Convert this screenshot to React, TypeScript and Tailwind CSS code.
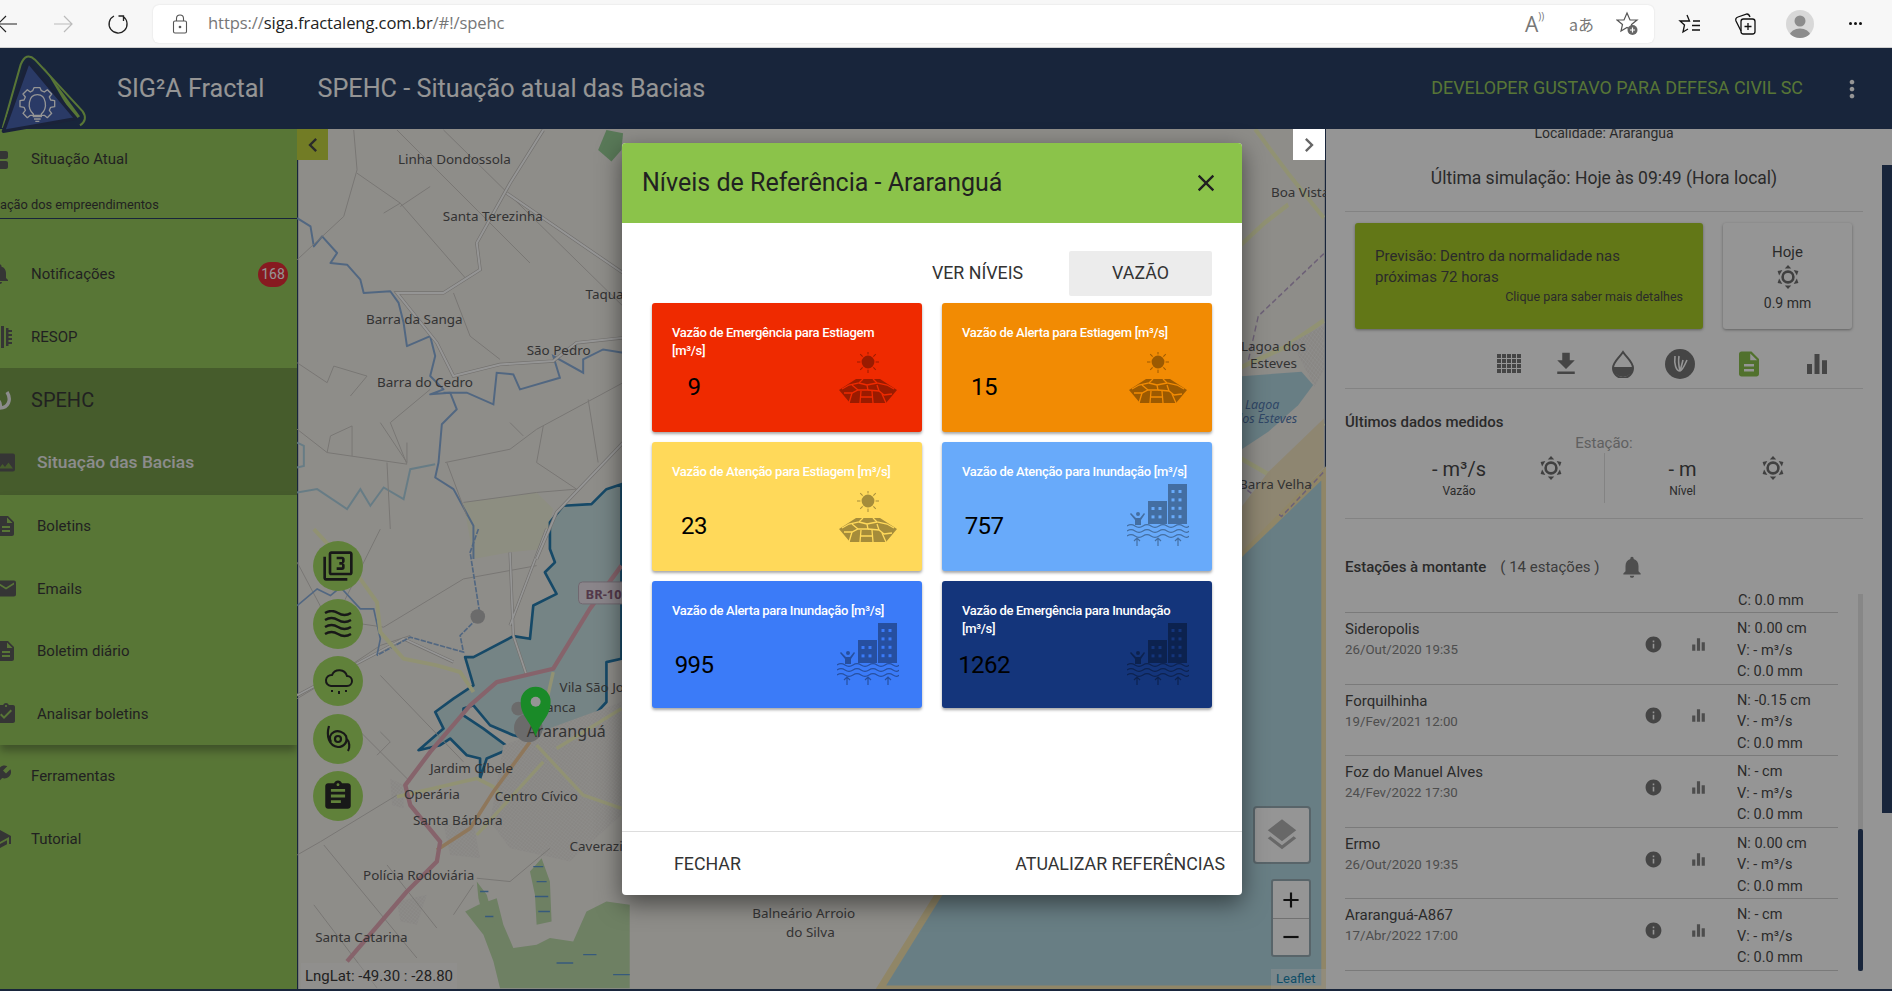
import type { FC, ReactNode } from "react";
import {
  MdFilter3,
  MdAssignment,
  MdAssignmentTurnedIn,
  MdBuild,
  MdClose,
  MdDescription,
  MdEmail,
  MdEqualizer,
  MdFileDownload,
  MdInfo,
  MdLayers,
  MdNotifications,
  MdPhoto,
  MdSchool,
  MdViewAgenda,
  MdChevronLeft,
  MdChevronRight,
  MdAdd,
  MdRemove,
  MdMoreVert,
} from "react-icons/md";

const SunDot: FC<{ size?: number }> = ({ size = 24 }) => (
  <svg width={size} height={size} viewBox="0 0 24 24" className="text-[#5c5c5c]" fill="currentColor">
    <circle cx="12" cy="12" r="5.4" fill="none" stroke="currentColor" strokeWidth="2.6" />
    {[0, 60, 120, 180, 240, 300].map((r) => (
      <polygon key={r} points="8.8,3.6 15.2,3.6 12,0" transform={`rotate(${r} 12 12)`} />
    ))}
  </svg>
);

const Drought: FC = () => (
  <svg width="58" height="52" viewBox="0 0 58 52" fill="currentColor" className="opacity-35">
    <defs>
      <mask id="cracks">
        <polygon points="17,27 41,27 58,38 47,51 11,51 0,38" fill="#fff" />
        <g stroke="#000" strokeWidth="1.3" fill="none">
          <path d="M24 27 L20 31 L10 33 L3 37 M34 27 L38 31 L48 33 L55 37" />
          <path d="M20 31 L28 33 L38 31 M28 33 L29 38 L19 38 L13 41 L5 41" />
          <path d="M29 38 L40 39 L45 43 L53 42 M40 39 L38 33 M19 38 L13 33" />
          <path d="M22 39 L21 51 M33 39 L34 51 M13 41 L10 51 M43 42 L47 51 M21 45 L34 45" />
        </g>
      </mask>
    </defs>
    <circle cx="29" cy="10" r="6.4" />
    {[0, 45, 90, 135, 180, 225, 270, 315].map((r) => (
      <rect key={r} x="28.5" y="-1" width="1" height="3.4" transform={`rotate(${r} 29 10)`} />
    ))}
    <rect x="0" y="26" width="58" height="26" mask="url(#cracks)" />
  </svg>
);

const windows = (x: number, y: number, rows: number, cols: number) => {
  const rects = [];
  for (let r = 0; r < rows; r++) {
    for (let c = 0; c < cols; c++) {
      rects.push(<rect key={`${r}-${c}`} x={x + c * 7} y={y + r * 8.4} width="3" height="3" fill="var(--hole)" />);
    }
  }
  return rects;
};

const Flood: FC<{ hole: string }> = ({ hole }) => (
  <svg
    width="62"
    height="62"
    viewBox="0 0 62 62"
    style={{ ["--hole" as string]: hole }}
    fill="currentColor"
    stroke="none"
  >
    <g className="opacity-35">
      <rect x="41" y="0" width="19" height="40" />
      <rect x="21" y="17" width="19" height="23" />
      <circle cx="11" cy="30" r="2" />
      <path d="M4 29 L9 34 H13 L17 29 L18 30 L14 36 V41 H8 V36 L3 30Z" />
      <g fill="none" stroke="currentColor" strokeWidth="1.2">
        <path d="M0 42 q4 -2.6 8 0 t8 0 t8 0 t8 0 t8 0 t8 0 t8 0 t6 0" />
        <path d="M0 47 q4 -2.6 8 0 t8 0 t8 0 t8 0 t8 0 t8 0 t8 0 t6 0" />
        <path d="M0 52 q4 -2.6 8 0 t8 0 t8 0 t8 0 t8 0 t8 0 t8 0 t6 0" />
        {[10, 31, 51].map((x) => (
          <path key={x} d={`M${x} 62 V54 M${x - 3} 57 L${x} 54 L${x + 3} 57`} />
        ))}
      </g>
    </g>
    {windows(44.5, 6, 4, 2)}
    {windows(24.5, 23, 2, 2)}
  </svg>
);

type CardProps = {
  title: ReactNode;
  value: string;
  bg: string;
  flood?: boolean;
  hole?: string;
};

const LevelCard: FC<CardProps> = ({ title, value, bg, flood, hole = "" }) => (
  <div className={`relative h-full rounded-[3px] px-5 pt-[21px] shadow-[0_2px_3px_rgba(0,0,0,.35)] ${bg}`}>
    <p className="text-[13px] leading-[18px] font-medium tracking-[-0.3px] text-white">{title}</p>
    <span className="absolute top-[69px] left-0 w-[84px] text-center text-[24px] leading-[30px] tracking-[-0.6px] text-black">
      {value}
    </span>
    {flood ? (
      <div className="absolute top-[42px] left-[185px] text-black">
        <Flood hole={hole} />
      </div>
    ) : (
      <div className="absolute top-[49px] left-[187px] text-black">
        <Drought />
      </div>
    )}
  </div>
);

const BrowserBar: FC = () => (
  <div className="flex h-[48px] shrink-0 items-center border-b border-[#d0d0d0] bg-[#f7f7f7]">
    <svg width="20" height="20" viewBox="0 0 20 20" className="ml-[-3px]" fill="none" stroke="#222" strokeWidth="1.2">
      <path d="M1 10 H20 M9 2 L1 10 L9 18" />
    </svg>
    <svg width="20" height="20" viewBox="0 0 20 20" className="ml-[36px]" fill="none" stroke="#bbb" strokeWidth="1.2">
      <path d="M1 10 H19 M11 2 L19 10 L11 18" />
    </svg>
    <svg width="22" height="22" viewBox="0 0 22 22" className="ml-[34px]" fill="none" stroke="#222" strokeWidth="1.3">
      <path d="M16 3.5 A9 9 0 1 1 7 3" />
      <path d="M11.5 3 H16.5 V8" />
    </svg>
    <div className="ml-[24px] flex h-[38px] w-[1501px] items-center rounded-[6px] bg-white pr-[14px] shadow-[0_0_2px_rgba(0,0,0,.12)]">
      <svg width="16" height="20" viewBox="0 0 16 20" className="ml-[19px]" fill="none" stroke="#555" strokeWidth="1.1">
        <rect x="1.5" y="7" width="13" height="12" rx="1.5" />
        <path d="M4.5 7 V4.5 a3.5 3.5 0 0 1 7 0 V7" />
        <circle cx="8" cy="13" r=".8" fill="#555" />
      </svg>
      <span className="ml-[20px] font-['Open_Sans',sans-serif] text-[16.6px] tracking-[-0.1px] text-[#777]">
        https://<span className="text-[#222]">siga.fractaleng.com.br</span>/#!/spehc
      </span>
      <div className="ml-auto flex items-center gap-[22px]">
        <span className="mr-[-4px] flex h-6 w-[26px] items-start font-['Open_Sans',sans-serif] text-[21px] leading-[24px] text-[#777]">
          A
          <span className="mt-[-2px] text-[10px] leading-[12px]">))</span>
        </span>
        <span className="font-['Noto_Sans_CJK_JP',sans-serif] text-[16px] text-[#777]">aあ</span>
        <svg width="24" height="26" viewBox="0 0 24 26" fill="none" stroke="#555" strokeWidth="1.2">
          <path d="M11 2 L14 9 H21 L15.5 13.5 L17 20 L11 16.5 L5 20 L6.5 13.5 L1 9 H8Z" />
          <circle cx="16.5" cy="19" r="5" fill="#666" stroke="none" />
          <path d="M14 19 H19 M16.5 16.5 V21.5" stroke="#fff" />
        </svg>
      </div>
    </div>
    <div className="ml-[24px] flex items-center">
      <svg width="24" height="24" viewBox="0 0 24 24" fill="none" stroke="#111" strokeWidth="1.3">
        <path d="M9 3 L11.5 9 H6 H2 L6.5 13 L5 20 L10 17 M22 9 H15 M22 13.5 H14 M22 18 H14" />
      </svg>
      <svg width="24" height="26" viewBox="0 0 24 26" className="ml-[31px]" fill="none" stroke="#111" strokeWidth="1.3">
        <rect x="8" y="8" width="14" height="15" rx="2.5" />
        <path d="M8 20 L3 10 Q2 7 5 6 L14 3 Q16 3 17 6" />
        <path d="M15 12 V19 M11.5 15.5 H18.5" />
      </svg>
      <div className="ml-[29px] h-[28px] w-[28px] overflow-hidden rounded-full bg-[#d8d8d8]">
        <svg width="28" height="28" viewBox="0 0 28 28" fill="#8c8c8c">
          <circle cx="14" cy="11" r="5.5" />
          <ellipse cx="14" cy="25" rx="10" ry="6.5" />
        </svg>
      </div>
      <span className="ml-[35px] flex gap-[2px]">
        <i className="h-[3px] w-[3px] rounded-full bg-[#111]" />
        <i className="h-[3px] w-[3px] rounded-full bg-[#111]" />
        <i className="h-[3px] w-[3px] rounded-full bg-[#111]" />
      </span>
    </div>
  </div>
);

const Logo: FC = () => (
  <svg width="100" height="90" viewBox="0 0 300 270" className="absolute top-0 left-0" fill="none">
    <path d="M8 240 L62 50 Q78 10 105 35 L248 190 Q265 215 240 232" stroke="#8bc34a" strokeWidth="6" />
    <path d="M130 55 L240 205 L225 215Z" fill="#8bc34a" />
    <path d="M85 42 L228 212 L10 250Z" fill="#3251a5" stroke="#14244f" strokeWidth="10" strokeLinejoin="round" />
    <g stroke="#fff" strokeWidth="4" strokeLinejoin="round">
      <path d="M98 128 L102 119 H120 L124 128 L133 132 L142 125 L155 138 L148 147 L152 156 L164 158 V176 L152 178 L148 187 L155 196 L142 209 L133 202 H91 L82 209 L69 196 L76 187 L72 178 L60 176 V158 L72 156 L76 147 L69 138 L82 125 L91 132Z" />
      <path d="M100 198 C80 180 85 140 112 140 C139 140 144 180 124 198 V206 H100Z" />
      <path d="M102 213 H122 M106 220 H118" />
    </g>
  </svg>
);

const labels: [string, number, number, number?][] = [
  ["Linha Dondossola", 397, 164],
  ["Santa Terezinha", 442, 221],
  ["Taquari", 585, 299],
  ["Barra da Sanga", 365, 324],
  ["São Pedro", 526, 356],
  ["Barra do Cedro", 376, 388],
  ["Vila São João", 559, 693],
  ["Franca", 533, 713],
  ["Araranguá", 526, 738, 16],
  ["Jardim Cibele", 429, 774],
  ["Operária", 403, 801],
  ["Centro Cívico", 494, 803],
  ["Santa Bárbara", 412, 827],
  ["Caverazinho", 569, 853],
  ["Polícia Rodoviária", 362, 882],
  ["Santa Catarina", 314, 944],
  ["Balneário Arroio", 752, 920],
  ["do Silva", 786, 939],
  ["Boa Vista", 1272, 197],
  ["Lagoa dos", 1242, 352],
  ["Esteves", 1251, 369],
  ["Barra Velha", 1240, 490],
];

const z10Roads = "M640 70 L650 320 L690 440 M750 0 L640 290 M0 500 L320 330 L470 400";
const z9Roads =
  "M740 0 L640 160 L540 340 L550 420 L440 490 L300 490 L420 640 L470 740 L610 705 L770 695 L840 640 L980 625 M980 430 L630 190 M980 940 L780 1150 L720 1290";

const MapLayer: FC = () => (
  <svg viewBox="297 129 1029 862" className="absolute inset-0 h-full w-full" fill="none">
    <defs>
      <pattern id="town" width="8" height="8" patternUnits="userSpaceOnUse" patternTransform="rotate(38)">
        <rect width="8" height="8" fill="#e8e5df" />
        <path d="M0 0 H8 M0 0 V8" stroke="#fbfbfb" strokeWidth="1.4" />
      </pattern>
    </defs>
    <rect x="297" y="129" width="1029" height="862" fill="#f2efe9" />
    <polygon points="1326,473 1243,553 1100,700 980,830 880,991 1326,991" fill="#aad3df" stroke="#f5e3a8" strokeWidth="7" />

    <g transform="translate(296 530) scale(.3333)">
      <path d="M500 -80 L720 -110 L770 -60 L740 60 L640 70 L530 90Z" fill="#f0f1d8" />
      <polygon points="975,-135 930,-120 885,-75 800,-70 760,-20 760,60 775,100 745,130 780,195 710,230 700,330 650,322 530,385 505,385 530,470 470,510 415,550 440,600 365,665 430,650 460,630 510,680 550,690 550,750 570,690 640,660 560,600 500,560 500,540 530,530 580,590 650,620 740,640 790,640 790,690 830,680 830,715 850,650 890,645 820,640 930,520 930,400 975,390" fill="#c2dfe0" stroke="#0d6ea8" strokeWidth="8" strokeLinejoin="round" />
      <polygon points="620,650 975,520 975,860 820,1000 640,960 580,880" fill="url(#town)" />
      <polygon points="280,750 320,770 320,840 285,830" fill="url(#town)" />
      <polygon points="440,890 530,880 550,990 460,980" fill="url(#town)" />
      <polygon points="300,1120 390,1100 360,1190 310,1180" fill="url(#town)" />
      <path d="M505 1150 L545 1130 L600 1110 L620 1190 L650 1260 L720 1250 L760 1230 L830 1240 L870 1150 L930 1120 L1000 1130 L1000 1381 L610 1381 L590 1300 L560 1220Z" fill="#b4d6a0" />
      <path d="M700 1030 L735 990 L760 1060 L765 1180 L720 1190 L715 1100Z M540 1060 L570 1100 L595 1190 L560 1170 L545 1110Z" fill="#b4d6a0" />
      <path d="M710 1015 H740 M720 1060 H750 M715 1105 H755 M725 1150 H760 M550 1090 H575 M565 1165 H590 M860 1280 H900 M780 1305 H830 M950 1340 H1000" stroke="#4a8fd0" strokeWidth="4" />

      <g stroke="#c8c5bf" strokeWidth="3">
        <path d="M0 100 L90 270 L260 295 L500 150 L720 110 M0 510 L100 450 L250 350 L340 320 M0 980 L70 940 L300 800 M80 950 L360 1290 M120 260 L250 0 M250 440 L500 700 M180 600 L340 760 M250 610 L280 640 L240 680 M50 1130 L240 1380 M270 1010 L420 1200 M540 1050 L640 1060 L760 960 M470 1160 L530 1070" />
      </g>
      <path d={z10Roads} stroke="#bdbab4" strokeWidth="9" />
      <path d={z10Roads} stroke="#fff" strokeWidth="5" />
      <path d="M545 0 L520 70 L550 260 L490 320 L500 370 L340 325 L240 380" stroke="#7ea7d8" strokeWidth="5" strokeDasharray="16 4" />
      <path d="M0 230 L60 180 L100 200 L130 175 L190 240 L230 240 L250 330 L240 380" stroke="#7ea7d8" strokeWidth="5" />
      <path d="M50 0 L190 150 L240 220 L250 310 L320 390 L420 410 L490 430 L530 490" stroke="#f7fabf" strokeWidth="12" />
      <path d="M300 805 L540 750 L590 775 L610 800" stroke="#f7fabf" strokeWidth="11" />
      <path d="M700 640 L590 790 L520 900 L420 965" stroke="#f2c591" strokeWidth="11" />
      <path d="M770 430 L740 560 M720 650 L860 800 L975 840 M740 700 L540 920 M780 660 L975 540" stroke="#f7fabf" strokeWidth="10" />
      <path d="M975 110 L880 240 L770 420 L600 460 L520 530 L400 670 L325 770 L340 830 L430 940 L420 1000 L330 1090 L150 1300" stroke="#e2a0ae" strokeWidth="13" strokeLinejoin="round" />
      <circle cx="543" cy="263" r="22" fill="#afafaf" />
      <circle cx="665" cy="540" r="21" fill="#afafaf" />
      <circle cx="695" cy="598" r="43" fill="#afafaf" />
    </g>

    <g transform="translate(296 130) scale(.3333)">
      <path d="M0 265 L40 290 L50 350 L75 320 L120 370 L100 400 L150 405 L190 450 L200 490 L280 485 L305 520 L320 580 L330 650 L400 620 L415 680 L400 740 L440 780 L400 795 L460 790 L480 840 L435 885 L425 1000 L415 1045 L470 1080 L530 1190 L530 1290" stroke="#7ea7d8" strokeWidth="6" strokeLinejoin="round" />
      <path d="M440 790 L510 790 L590 825 L600 730 L650 735 L670 780 L790 745 L770 680 L860 730 L860 690 L920 660 L980 670" stroke="#7ea7d8" strokeWidth="6" />
      <path d="M0 1090 L60 1080 L150 1140 L190 1080 L220 1130 L260 1075 L320 1110 L340 1020 L415 1005 M0 940 L20 950 L20 1010 L0 1015" stroke="#a8d0e0" strokeWidth="6" />
      <g stroke="#c8c5bf" strokeWidth="3">
        <path d="M170 0 L180 120 L140 260 L0 390 M180 130 L310 220 L510 450 M300 0 L700 400 M440 0 L980 530 M310 230 L400 170 M260 250 L310 220 M0 700 L90 760 L110 710 L210 740 L160 800 M0 900 L90 970 L330 1005 L280 880 L400 780 M250 880 L330 1000 L330 940 M270 1000 L280 1200 M90 970 L100 920 L165 890 L165 980 M445 1000 L640 960 L720 900 L980 760 M740 890 L720 1000 L840 1080 M875 810 L905 1000 M500 1120 L720 1090 L840 1080 M450 1000 L510 1160 M640 880 L680 920 M470 490 L520 620 L610 690" />
      </g>
      <path d={z9Roads} stroke="#bdbab4" strokeWidth="10" />
      <path d={z9Roads} stroke="#fff" strokeWidth="6" />
      <polygon points="930,0 980,10 975,60 945,95 905,60" fill="#8cc98a" />
    </g>

    <g transform="translate(1236 129) scale(.3333 .4464)">
      <path d="M18 555 L200 545 L235 575 L190 620 L100 680 L18 720Z" fill="#aad3df" />
      <path d="M60 0 L160 100 L267 200 M160 170 L90 210 L18 260 M18 535 L150 490 L267 430 M18 740 L100 775 L170 760 L267 660" stroke="#f7fabf" strokeWidth="11" />
      <path d="M267 280 L70 420 L40 520 M18 800 L140 870 L267 770" stroke="#b29bc4" strokeWidth="4" strokeDasharray="14 8" />
      <polygon points="170,480 267,440 267,540 240,580" fill="url(#town)" />
      <polygon points="18,850 100,770 267,650 267,760 18,950" fill="#f1e3bb" />
    </g>

    <g fontFamily="'Noto Sans', sans-serif" fill="#444">
      {labels.map(([t, x, y, s]) => (
        <text key={t} x={x} y={y} fontSize={s ?? 13.5}>
          {t}
        </text>
      ))}
      <text x="1246" y="410" fontSize="12.5" fontStyle="italic" fill="#3d6aa6">Lagoa</text>
      <text x="1236" y="424" fontSize="12.5" fontStyle="italic" fill="#3d6aa6">dos Esteves</text>
    </g>
    <g>
      <rect x="578" y="583" width="60" height="22" rx="4" fill="#eae0ea" stroke="#b8a8b8" />
      <text x="585" y="600" fontSize="13" fontFamily="'Noto Sans', sans-serif" fontWeight="700" fill="#805070">BR-101</text>
    </g>
    <path d="M535 738 C530 722 520 718 520 703 A15 15 0 0 1 550 703 C550 718 540 722 535 738Z" fill="#14ea2e" />
    <circle cx="535" cy="703" r="5" fill="#fff" />
  </svg>
);

const MapButton: FC<{ children: ReactNode }> = ({ children }) => (
  <div className="flex h-[50px] w-[50px] items-center justify-center rounded-full bg-[#9ad951] text-[#111]">{children}</div>
);

const SideRow: FC<{ icon: ReactNode; text: string; sub?: boolean; className?: string; right?: ReactNode }> = ({
  icon,
  text,
  sub,
  className = "text-[15px]",
  right,
}) => (
  <div className="flex h-[62.5px] items-center">
    <span className={`flex w-[24px] shrink-0 justify-center text-[#474747] ${sub ? "ml-[-6px]" : "ml-[-12px]"}`}>{icon}</span>
    <span className={`ml-[19px] ${className}`}>{text}</span>
    {right}
  </div>
);

const Sidebar: FC = () => (
  <aside className="w-[297px] shrink-0 overflow-hidden bg-[#8bc34a] text-[#222]">
    <div className="flex h-[60px] items-center pt-[1px]">
      <MdViewAgenda size={24} className="ml-[-13px] text-[#474747]" />
      <span className="ml-[20px] text-[15px]">Situação Atual</span>
    </div>
    <div className="mb-[24px] h-[30px] border-b border-[#112a53] pt-[8px] text-[12.8px] leading-[15px] whitespace-nowrap">
      <span className="ml-[-22px]">Situação dos empreendimentos</span>
    </div>
    <SideRow
      icon={<MdNotifications size={24} />}
      text="Notificações"
      right={
        <span className="mr-[9px] ml-auto flex h-[25px] w-[30px] items-center justify-center rounded-full bg-[#e4141f] text-[14px] text-white">
          168
        </span>
      }
    />
    <SideRow
      icon={
        <svg width="24" height="24" viewBox="0 0 24 24" fill="currentColor">
          <rect x="13" y="1" width="3" height="22" />
          <rect x="18" y="3" width="2.5" height="18" />
          <path d="M20 5h4v2h-4zM20 9h4v2h-4zM20 13h4v2h-4zM20 17h4v2h-4z" />
        </svg>
      }
      text="RESOP"
    />
    <div className="h-[127px] bg-[#689236]">
      <div className="flex h-[63px] items-center">
        <svg width="24" height="24" viewBox="0 0 24 24" className="ml-[-12px]" fill="none" stroke="#eee" strokeWidth="3.4">
          <path d="M19 4 C24 12 20 20 12 20 C13 16 12 13 8 11" />
        </svg>
        <span className="ml-[19px] text-[20px]">SPEHC</span>
      </div>
      <SideRow icon={<MdPhoto size={25} />} text="Situação das Bacias" sub className="text-[17.4px] font-medium text-[#eee]" />
    </div>
    <div className="shadow-[0_6px_8px_rgba(0,0,0,.35)]">
      <SideRow icon={<MdDescription size={26} />} text="Boletins" sub />
      <SideRow icon={<MdEmail size={25} />} text="Emails" sub />
      <SideRow icon={<MdDescription size={26} />} text="Boletim diário" sub />
      <SideRow icon={<MdAssignmentTurnedIn size={26} />} text="Analisar boletins" sub />
    </div>
    <SideRow icon={<MdBuild size={25} className="scale-x-[-1]" />} text="Ferramentas" />
    <SideRow icon={<MdSchool size={26} />} text="Tutorial" />
  </aside>
);

const stations = [
  { name: "Sideropolis", date: "26/Out/2020 19:35", n: "0.00 cm" },
  { name: "Forquilhinha", date: "19/Fev/2021 12:00", n: "-0.15 cm" },
  { name: "Foz do Manuel Alves", date: "24/Fev/2022 17:30", n: "- cm" },
  { name: "Ermo", date: "26/Out/2020 19:35", n: "0.00 cm" },
  { name: "Araranguá-A867", date: "17/Abr/2022 17:00", n: "- cm" },
];

const StationRow: FC<(typeof stations)[number]> = ({ name, date, n }) => (
  <div className="flex h-[71.6px] shrink-0 items-center border-b border-[#ccc]">
    <div className="w-[287px] self-start pt-[6px]">
      <p className="text-[15px] leading-[20px] text-[#333]">{name}</p>
      <p className="mt-[3px] text-[13.3px] leading-[16px] text-[#757575]">{date}</p>
    </div>
    <MdInfo size={19} className="mt-[-8px] ml-[12px] text-[#666]" />
    <MdEqualizer size={19} className="mt-[-8px] ml-[26px] text-[#757575]" />
    <div className="mt-[4px] ml-[29px] text-[14.5px] leading-[21.5px] text-[#333]">
      <p>N: {n}</p>
      <p>V: - m³/s</p>
      <p>C: 0.0 mm</p>
    </div>
  </div>
);

const GridIcon: FC = () => (
  <svg width="24" height="20" viewBox="0 0 24 20" fill="currentColor">
    {[0, 5, 10, 15].map((y) =>
      [0, 5, 10, 15, 20].map((x) => <rect key={`${x}-${y}`} x={x} y={y} width="4" height="4" />),
    )}
  </svg>
);

const Panel: FC = () => (
  <section className="flex w-[556px] shrink-0 flex-col overflow-hidden bg-white px-[19px] text-[#333]">
    <p className="mt-[-5px] text-center text-[14px] leading-[18px]">Localidade: Araranguá</p>
    <p className="mt-[24px] h-[46px] border-b border-[#ddd] text-center text-[17.5px] leading-[24px]">
      Última simulação: Hoje às 09:49 (Hora local)
    </p>
    <div className="mt-[11px] flex gap-[20px] pl-[10px]">
      <div className="flex h-[106px] w-[348px] flex-col rounded-[3px] bg-[#9dc60e] px-[20px] pt-[23px] shadow-[0_1px_3px_rgba(0,0,0,.4)]">
        <p className="text-[15px] leading-[21px]">
          Previsão: Dentro da normalidade nas
          <br />
          próximas 72 horas
        </p>
        <p className="mt-[1px] text-right text-[12.5px] leading-[16px]">Clique para saber mais detalhes</p>
      </div>
      <div className="flex h-[106px] w-[129px] flex-col items-center rounded-[3px] bg-white pt-[20px] shadow-[0_1px_3px_rgba(0,0,0,.4)]">
        <p className="text-[15px] leading-[18px]">Hoje</p>
        <span className="mt-[4px] h-[24px]"><SunDot /></span>
        <p className="mt-[5px] text-[14px] leading-[18px]">0.9 mm</p>
      </div>
    </div>
    <div className="mt-[20px] flex h-[40px] items-center border-b border-[#ddd] pb-[10px] text-[#666]">
      <span className="ml-[152px]"><GridIcon /></span>
      <MdFileDownload size={30} className="ml-[30px]" />
      <svg width="24" height="28" viewBox="0 0 24 28" className="ml-[30px]">
        <path d="M12 2 C8 8 2 12 2 18 A10 10 0 0 0 22 18 C22 12 16 8 12 2Z" fill="none" stroke="currentColor" strokeWidth="2" />
        <path d="M2 17 H22 A10 10 0 0 1 2 17Z" fill="currentColor" />
      </svg>
      <span className="ml-[30px] flex h-[30px] w-[30px] items-center justify-center rounded-full bg-[#666]">
        <svg width="20" height="20" viewBox="0 0 20 20" fill="none" stroke="#fff" strokeWidth="1.6">
          <path d="M5 2 C4 10 6 17 10 17 C13 16 16 8 17 6 M9 2 C8 8 9 13 10 17 M13 6 C12 10 11 14 10 17" />
        </svg>
      </span>
      <MdDescription size={30} className="ml-[39px] text-[#7dbb38]" />
      <MdEqualizer size={30} className="ml-[38px]" />
    </div>
    <p className="mt-[23px] text-[15px] leading-[20px] font-medium">Últimos dados medidos</p>
    <p className="mt-[1px] text-center text-[15px] leading-[20px] text-[#999]">Estação:</p>
    <div className="flex h-[50px] items-stretch">
      <div className="relative flex w-[259px] flex-col items-center justify-center">
        <span className="ml-[-31px] text-[20px] leading-[26px]">- m³/s</span>
        <span className="ml-[-31px] text-[12px] leading-[18px]">Vazão</span>
        <span className="absolute top-[3px] left-[194px]"><SunDot /></span>
      </div>
      <div className="w-px bg-[#ddd]" />
      <div className="relative flex flex-1 flex-col items-center justify-center">
        <span className="ml-[-103px] text-[20px] leading-[26px]">- m</span>
        <span className="ml-[-103px] text-[12px] leading-[18px]">Nível</span>
        <span className="absolute top-[3px] left-[156px]"><SunDot /></span>
      </div>
    </div>
    <div className="mt-[15px] border-t border-[#ddd]" />
    <div className="mt-[37px] flex h-[22px] items-center text-[15px]">
      <span className="font-medium">Estações à montante</span>
      <span className="ml-[14px] text-[#555]">( 14 estações )</span>
      <MdNotifications size={26} className="ml-[19px] text-[#777]" />
    </div>
    <div className="relative mt-[14px] flex h-[379px] flex-col justify-end overflow-hidden pr-[25px]">
      <div className="shrink-0 border-b border-[#ccc] pb-[1px] pl-[393px] text-[14.5px] leading-[20px]">C: 0.0 mm</div>
      {stations.map((s) => (
        <StationRow key={s.name} {...s} />
      ))}
      <div className="absolute top-[2px] right-0 bottom-0 w-[5px] bg-[#e4e4e4]">
        <div className="absolute right-0 bottom-0 h-[142px] w-full rounded-[2px] bg-[#112a53]" />
      </div>
    </div>
  </section>
);

const App: FC = () => (
  <div className="relative flex h-[991px] w-full flex-col overflow-hidden font-['Roboto',sans-serif]">
    <BrowserBar />
    <div className="relative flex min-h-0 flex-1 flex-col bg-[#112a53]">
      <header className="relative flex h-[81px] shrink-0 items-center bg-[#112a53] pr-[26px] pl-[117px] text-white">
        <Logo />
        <span className="text-[25.2px]">SIG²A Fractal</span>
        <span className="ml-[53px] text-[25.2px]">SPEHC - Situação atual das Bacias</span>
        <span className="ml-auto text-[17.9px] text-[#8bc34a]">DEVELOPER GUSTAVO PARA DEFESA CIVIL SC</span>
        <MdMoreVert size={28} className="ml-[35px]" />
      </header>
      <div className="flex h-[860px] shrink-0">
        <Sidebar />
        <div className="relative flex-1 overflow-hidden">
          <MapLayer />
          <div className="absolute top-0 left-0 flex h-[31px] w-[31px] items-center justify-center bg-[#bccf2a] text-[#333]">
            <MdChevronLeft size={28} />
          </div>
          <div className="absolute top-[412px] left-[16px] flex flex-col gap-[7.5px]">
            <MapButton><MdFilter3 size={32} /></MapButton>
            <MapButton>
              <svg width="30" height="28" viewBox="0 0 30 28" fill="none" stroke="currentColor" strokeWidth="2.4">
                <path d="M2 5 q6.5 -4 13 0 t13 0 M2 12 q6.5 -4 13 0 t13 0 M2 19 q6.5 -4 13 0 t13 0 M2 26 q6.5 -4 13 0 t13 0" transform="translate(0 -2)" />
              </svg>
            </MapButton>
            <MapButton>
              <svg width="30" height="30" viewBox="0 0 30 30" fill="none" stroke="currentColor" strokeWidth="2">
                <path d="M8 20 H24 A5 5 0 0 0 24 10 A8 8 0 0 0 9 9 A5.5 5.5 0 0 0 8 20Z" />
                <path d="M9 24 v2 M16 25 v3 M23 24 v2" strokeWidth="2" />
              </svg>
            </MapButton>
            <MapButton>
              <svg width="30" height="30" viewBox="0 0 30 30" fill="none" stroke="currentColor" strokeWidth="2.2">
                <circle cx="15" cy="15" r="3" />
                <path d="M6 2 C3 12 6 22 15 23 C21 23 25 18 23 12 C21 8 15 6 11 8 C7 10 6 14 8 18 M23 14 C27 18 27 24 25 27" />
              </svg>
            </MapButton>
            <MapButton><MdAssignment size={34} /></MapButton>
          </div>
          <div className="absolute top-[834px] left-[4px] h-[26px] bg-white/35 px-[4px] text-[15px] leading-[26px] text-[#222]">
            LngLat: -49.30 : -28.80
          </div>
          <div className="absolute top-[677px] left-[956px] flex h-[58px] w-[58px] items-center justify-center rounded-[4px] border-2 border-[#8aa2ab] bg-white text-[#aaa]">
            <MdLayers size={38} />
          </div>
          <div className="absolute top-[750px] left-[974px] flex h-[78px] w-[40px] flex-col rounded-[3px] border-2 border-[#8aa2ab] bg-white text-black">
            <span className="flex h-[38px] items-center justify-center border-b border-[#bbb]"><MdAdd size={26} /></span>
            <span className="flex flex-1 items-center justify-center"><MdRemove size={26} /></span>
          </div>
          <div className="absolute right-0 bottom-0 h-[20px] w-[55px] bg-white/40 pl-[5px] text-[13px] leading-[20px] text-[#0078a8]">
            Leaflet
          </div>
        </div>
        <Panel />
        <div className="w-[10px] shrink-0 bg-white">
          <div className="mt-[36px] h-[648px] bg-[#112a53]" />
        </div>
      </div>

      <div className="absolute inset-0 bg-[#212121]/48" />

      <div className="absolute top-[81px] left-[1293px] flex h-[31px] w-[32px] items-center justify-center bg-white text-[#666]">
        <MdChevronRight size={28} />
      </div>

      <div className="absolute top-[95px] left-[622px] flex h-[752px] w-[620px] flex-col overflow-hidden rounded-[4px] bg-white shadow-[0_8px_24px_rgba(0,0,0,.5)]">
        <div className="flex h-[80px] shrink-0 items-center justify-between bg-[#8bc34a] pr-[22px] pl-[20px] text-[#212121]">
          <h2 className="text-[25px] font-normal">Níveis de Referência - Araranguá</h2>
          <MdClose size={28} />
        </div>
        <div className="mt-[28px] flex h-[45px] shrink-0 justify-end pr-[30px] text-[17.8px] text-[#333] uppercase">
          <span className="flex w-[143px] items-center justify-center">Ver níveis</span>
          <span className="ml-[20px] flex w-[143px] items-center justify-center rounded-[2px] bg-[#ececec]">Vazão</span>
        </div>
        <div className="mt-[7px] grid grid-cols-[270px_270px] grid-rows-[129px_129px_127px] gap-x-[20px] gap-y-[10px] pl-[30px]">
          <LevelCard bg="bg-[#ef2a00]" value="9" title="Vazão de Emergência para Estiagem [m³/s]" />
          <LevelCard bg="bg-[#f28b03]" value="15" title="Vazão de Alerta para Estiagem [m³/s]" />
          <LevelCard bg="bg-[#ffd95a]" value="23" title="Vazão de Atenção para Estiagem [m³/s]" />
          <LevelCard bg="bg-[#68aafa]" value="757" title="Vazão de Atenção para Inundação [m³/s]" flood hole="#68aafa" />
          <LevelCard bg="bg-[#3b7bf8]" value="995" title="Vazão de Alerta para Inundação [m³/s]" flood hole="#3b7bf8" />
          <LevelCard bg="bg-[#14357b]" value="1262" title="Vazão de Emergência para Inundação [m³/s]" flood hole="#14357b" />
        </div>
        <div className="mt-auto flex h-[64px] shrink-0 items-center justify-between border-t border-[#ddd] pt-[2px] pr-[17px] pl-[52px] text-[17.8px] text-[#333] uppercase">
          <span>Fechar</span>
          <span>Atualizar referências</span>
        </div>
      </div>
    </div>
  </div>
);

export default App;
